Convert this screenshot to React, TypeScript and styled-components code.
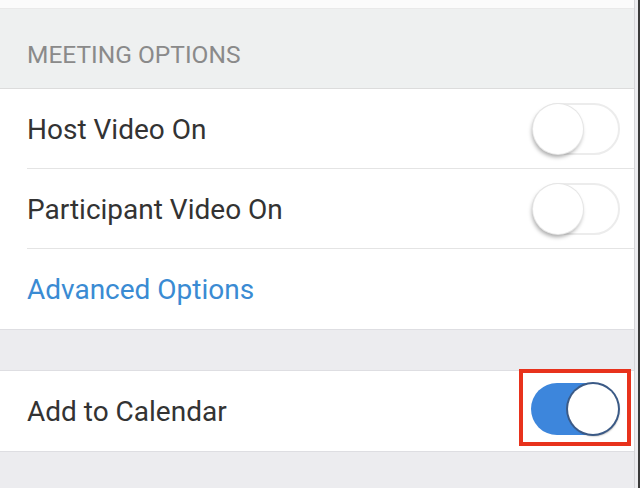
import { useState } from "react";
import styled, { createGlobalStyle } from "styled-components";

const GlobalStyle = createGlobalStyle`
  html, body {
    margin: 0;
    padding: 0;
    background: #ececef;
  }
  body {
    font-family: Roboto, "Noto Sans", "Liberation Sans", sans-serif;
  }
`;

const Frame = styled.div`
  width: 640px;
  height: 488px;
  display: flex;
  overflow: hidden;
  background: #ececef;
`;

const Screen = styled.div`
  width: 634px;
  display: flex;
  flex-direction: column;
  border-right: 1px solid #d6d6d9;
`;

const Edge = styled.div`
  width: 2px;
  margin-left: 3px;
  background: #3a3a3a;
`;

const TopStrip = styled.div`
  height: 8px;
  background: #fbfbfb;
  border-bottom: 1px solid #e9e9e9;
`;

const SectionHeader = styled.div`
  height: 80px;
  box-sizing: border-box;
  display: flex;
  align-items: center;
  padding: 12px 0 0 27px;
  background: #eef0f0;
  border-bottom: 1px solid #dcdcdc;
  color: #8a8a8a;
  font-size: 24.5px;
`;

const Group = styled.div`
  background: #fff;
  border-bottom: 1px solid #dedee2;
`;

const Row = styled.div<{ $divider?: boolean }>`
  height: 80px;
  display: flex;
  align-items: center;
  justify-content: space-between;
  padding: 0 14px 0 27px;
  position: relative;

  ${(p) =>
    p.$divider &&
    `
    &::after {
      content: "";
      position: absolute;
      left: 27px;
      right: 0;
      bottom: 0;
      height: 1px;
      background: #e4e4e4;
    }
  `}
`;

const Label = styled.span<{ $link?: boolean }>`
  font-size: 28px;
  color: ${(p) => (p.$link ? "#3a8bd3" : "#333")};
`;

const Gap = styled.div`
  height: 40px;
  background: #ececef;
  border-bottom: 1px solid #dedee2;
`;

const Highlight = styled.div`
  padding: 10px 8px 7px 8px;
  border: 4px solid #e8321c;
  margin-right: -11px;
  margin-bottom: 8px;
  display: flex;
`;

const Track = styled.button<{ $on: boolean }>`
  width: 88px;
  height: 52px;
  border-radius: 26px;
  padding: 0;
  position: relative;
  cursor: pointer;
  background: ${(p) => (p.$on ? "#3d86dc" : "#fff")};
  border: ${(p) => (p.$on ? "none" : "2px solid #ececec")};
  box-sizing: border-box;
`;

const Knob = styled.span<{ $on: boolean }>`
  position: absolute;
  top: ${(p) => (p.$on ? "1px" : "-1px")};
  left: ${(p) => (p.$on ? "37px" : "-1px")};
  width: 50px;
  height: 50px;
  border-radius: 50%;
  background: #fff;
  box-shadow: ${(p) =>
    p.$on
      ? "0 0 0 2px #3b5a86, 1px 2px 2px rgba(0,0,0,0.45)"
      : "0 0 0 1px #e6e6e6, -1px 3px 4px rgba(0,0,0,0.35)"};
`;

const Toggle = ({ on, onClick }: { on: boolean; onClick: () => void }) => (
  <Track $on={on} onClick={onClick} aria-pressed={on}>
    <Knob $on={on} />
  </Track>
);

export default function App() {
  const [host, setHost] = useState(false);
  const [participant, setParticipant] = useState(false);
  const [calendar, setCalendar] = useState(true);

  return (
    <Frame>
      <GlobalStyle />
      <Screen>
        <TopStrip />
        <SectionHeader>MEETING OPTIONS</SectionHeader>
        <Group>
          <Row $divider>
            <Label>Host Video On</Label>
            <Toggle on={host} onClick={() => setHost(!host)} />
          </Row>
          <Row $divider>
            <Label>Participant Video On</Label>
            <Toggle on={participant} onClick={() => setParticipant(!participant)} />
          </Row>
          <Row>
            <Label $link>Advanced Options</Label>
          </Row>
        </Group>
        <Gap />
        <Group>
          <Row>
            <Label>Add to Calendar</Label>
            <Highlight>
              <Toggle on={calendar} onClick={() => setCalendar(!calendar)} />
            </Highlight>
          </Row>
        </Group>
      </Screen>
      <Edge />
    </Frame>
  );
}
